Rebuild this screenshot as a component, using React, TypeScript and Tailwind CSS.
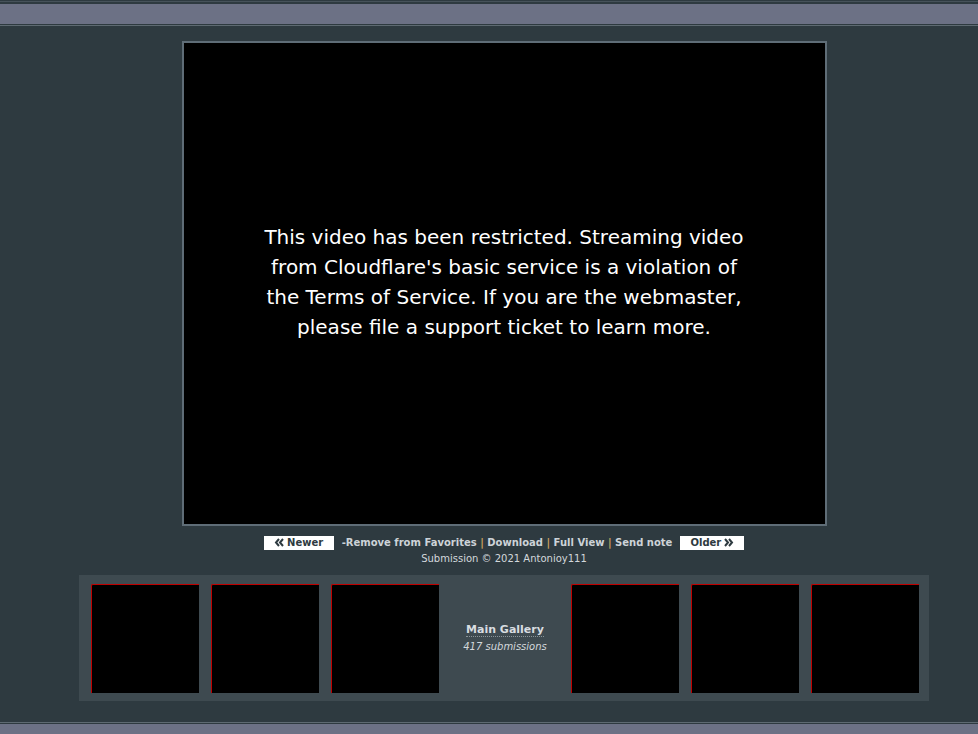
function Chevrons({ dir }: { dir: "left" | "right" }) {
  const d =
    dir === "left"
      ? "M5 1 L2 4.5 L5 8 M9 1 L6 4.5 L9 8"
      : "M1 1 L4 4.5 L1 8 M5 1 L8 4.5 L5 8";
  return (
    <svg width="10" height="9" viewBox="0 0 10 9" className="inline-block">
      <path d={d} stroke="#2e3a40" strokeWidth="2" fill="none" />
    </svg>
  );
}

export default function App() {
  const thumbs = [0, 1, 2];

  return (
    <main className="min-h-[734px] bg-[#2e3a40] flex flex-col font-['DejaVu_Sans',sans-serif]">
      {/* top bar */}
      <div className="border-t border-[#2e3a40] bg-[#46525a] pt-px">
        <div className="h-[1px] bg-[#2e3a40]" />
        <div className="h-[21px] bg-[#6c7185] border-t border-[#2e3a40]" />
        <div className="h-[1px] bg-[#2e3a40]" />
        <div className="h-[1px] bg-[#5e6a72]" />
      </div>

      <div className="ml-[79px] w-[850px] flex flex-col items-center pt-[15px]">
        <div className="w-[645px] h-[485px] border-2 border-[#5f6d77] bg-black flex items-center justify-center">
          <p className="text-center text-white text-[20px] leading-[30px] font-['DejaVu_Sans',sans-serif] -mt-[4px]">
            This video has been restricted. Streaming video
            <br />
            from Cloudflare's basic service is a violation of
            <br />
            the Terms of Service. If you are the webmaster,
            <br />
            please file a support ticket to learn more.
          </p>
        </div>

        <div className="mt-[9px] flex items-center text-[10px] font-bold text-[#cdd3d8]">
          <span className="bg-white text-[#2e3a40] w-[70px] h-[14px] flex items-center justify-center gap-[3px] leading-none">
            <Chevrons dir="left" />
            Newer
          </span>
          <span className="ml-[8px] mr-[8px]">
            -Remove from Favorites <span className="text-[#c9a15e]">|</span> Download{" "}
            <span className="text-[#c9a15e]">|</span> Full View{" "}
            <span className="text-[#c9a15e]">|</span> Send note
          </span>
          <span className="bg-white text-[#2e3a40] w-[64px] h-[14px] flex items-center justify-center gap-[3px] leading-none">
            Older
            <Chevrons dir="right" />
          </span>
        </div>

        <div className="mt-[1px] text-[10px] text-[#d3d8dc]">Submission © 2021 Antonioy111</div>

        <div className="mt-[9px] w-[850px] h-[126px] bg-[#3e4a50] pl-[12px] pr-[10px] pt-[9px] grid grid-cols-[repeat(7,108px)] gap-[12px]">
          {thumbs.map((i) => (
            <div key={i} className="h-[109px] bg-black border-t border-l border-[#c00000] rounded-tl-[2px]" />
          ))}
          <div className="h-[109px] flex flex-col items-center justify-center">
            <span className="text-[11px] font-bold text-[#d8dde0] border-b border-dotted border-[#8a9499] leading-[13px]">
              Main Gallery
            </span>
            <span className="mt-[2px] text-[10px] italic text-[#d3d8dc]">417 submissions</span>
          </div>
          {thumbs.map((i) => (
            <div key={"r" + i} className="h-[109px] bg-black border-t border-l border-[#c00000] rounded-tl-[2px]" />
          ))}
        </div>
      </div>

      <div className="mt-auto">
        <div className="h-[1px] bg-[#5e6a72]" />
        <div className="h-[1px] bg-[#2e3a40]" />
        <div className="h-[10px] bg-[#6c7185]" />
      </div>
    </main>
  );
}
